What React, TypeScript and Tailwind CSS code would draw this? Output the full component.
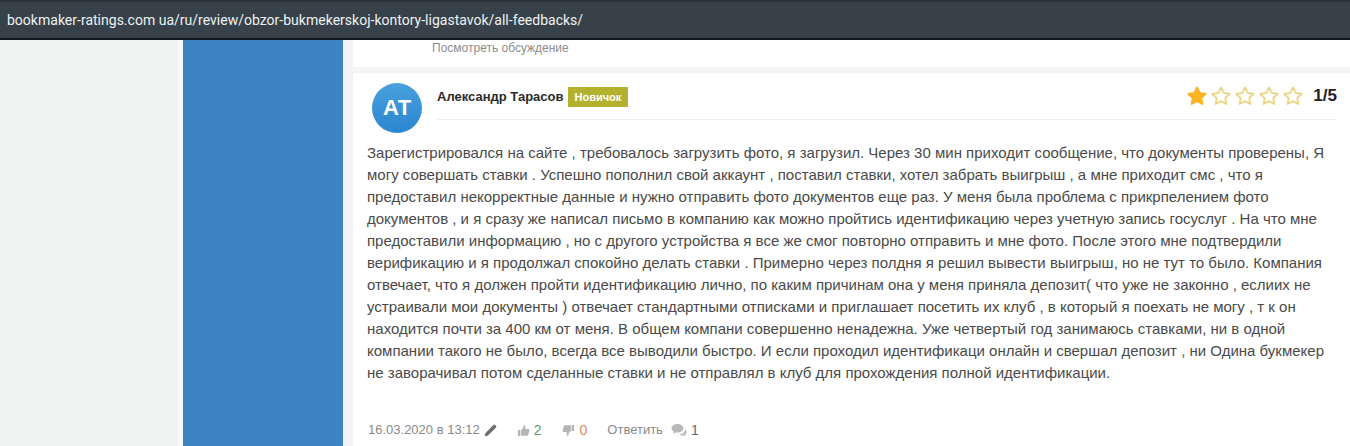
import React from "react";
import { Pencil } from "lucide-react";

const lines = [
  "Зарегистрировался на сайте , требовалось загрузить фото, я загрузил. Через 30 мин приходит сообщение, что документы проверены, Я",
  "могу совершать ставки . Успешно пополнил свой аккаунт , поставил ставки, хотел забрать выигрыш , а мне приходит смс , что я",
  "предоставил некорректные данные и нужно отправить фото документов еще раз. У меня была проблема с прикрпелением фото",
  "документов , и я сразу же написал письмо в компанию как можно пройтись идентификацию через учетную запись госуслуг . На что мне",
  "предоставили информацию , но с другого устройства я все же смог повторно отправить и мне фото. После этого мне подтвердили",
  "верификацию и я продолжал спокойно делать ставки . Примерно через полдня я решил вывести выигрыш, но не тут то было. Компания",
  "отвечает, что я должен пройти идентификацию лично, по каким причинам она у меня приняла депозит( что уже не законно , еслиих не",
  "устраивали мои документы ) отвечает стандартными отписками и приглашает посетить их клуб , в который я поехать не могу , т к он",
  "находится почти за 400 км от меня. В общем компани совершенно ненадежна. Уже четвертый год занимаюсь ставками, ни в одной",
  "компании такого не было, всегда все выводили быстро. И если проходил идентификаци онлайн и свершал депозит , ни Одина букмекер",
  "не заворачивал потом сделанные ставки и не отправлял в клуб для прохождения полной идентификации.",
];

const starPath = "M12 2.6l2.9 6.1 6.6.9-4.8 4.6 1.2 6.6L12 17.6l-5.9 3.2 1.2-6.6L2.5 9.6l6.6-.9z";

function Star({ filled }: { filled?: boolean }) {
  return (
    <svg viewBox="0 0 24 24" className="w-[22px] h-[22px] shrink-0">
      <path
        d={starPath}
        fill={filled ? "#f9b621" : "#ffffff"}
        stroke={filled ? "#f9b621" : "#ecd582"}
        strokeWidth="2"
        strokeLinejoin="round"
      />
    </svg>
  );
}

function Thumb({ down }: { down?: boolean }) {
  return (
    <svg viewBox="0 0 14 14" className={`w-[13px] h-[13px] ${down ? "rotate-180" : ""}`} fill="#b5b5b5">
      <path d="M1 6.5h2.6V13H1zM4.4 6.6 7 3.4V1c1.3 0 2 .9 2 2v2.4h3.2c.8 0 1.3.7 1.1 1.4l-1.2 5c-.1.5-.6.9-1.1.9H4.4z" />
    </svg>
  );
}

function Comments() {
  return (
    <svg viewBox="0 0 16 14" className="w-[16px] h-[14px]" fill="#b9b9b9">
      <path d="M6.5 1C3.2 1 .5 2.9.5 5.3c0 1.4.9 2.600 2.300 3.400-.2.8-.7 1.500-1.300 2 1.300-.1 2.500-.6 3.400-1.300.5.1 1.100.2 1.600.2 3.300 0 6-1.900 6-4.300S9.800 1 6.500 1z" />
      <path d="M14 5.600c.1.300.1.500.1.800 0 2.700-2.700 4.800-6.200 5 .9.700 2 1 3.200 1 .4 0 .8 0 1.200-.1.700.5 1.600.8 2.500.9-.4-.4-.7-.9-.9-1.500 1-.6 1.600-1.500 1.600-2.600 0-1.500-.600-2.800-1.500-3.500z" />
    </svg>
  );
}

export default function App() {
  return (
    <div className="w-[1350px] h-[446px] overflow-hidden flex flex-col bg-white font-['Liberation_Sans',Arial,sans-serif]">
      <div className="h-[40px] shrink-0 bg-[#36414a] border-t-2 border-b-2 border-t-[#2a323a] border-b-[#10171f] flex items-center pl-[7px] pb-[1px]">
        <span className="text-[#eef1f3] text-[14px] leading-none tracking-[0.01px] font-['Roboto',sans-serif]">
          bookmaker-ratings.com ua/ru/review/obzor-bukmekerskoj-kontory-ligastavok/all-feedbacks/
        </span>
      </div>
      <div className="flex-1 flex min-h-0">
        <div className="w-[178px] shrink-0 bg-[#f0f3f2]" />
        <div className="w-[5px] shrink-0 bg-[#f7f8f9]" />
        <div className="w-[160px] shrink-0 bg-[#3b83c2]" />
        <div className="w-[10px] shrink-0 bg-[#f2f3f5]" />
        <div className="flex-1 flex flex-col min-w-0">
          <div className="h-[27px] shrink-0 pl-[79px] pt-[1px] text-[12px] leading-[14px] text-[#8d8d8d]">
            Посмотреть обсуждение
          </div>
          <div className="h-[6px] shrink-0 bg-[#f4f4f4]" />
          <div className="flex-1 flex flex-col pl-[14px] pr-[14px]">
            <div className="flex pt-[10px] h-[69px] shrink-0">
              <div className="w-[50px] h-[50px] rounded-full bg-gradient-to-b from-[#4aa0dd] to-[#2a86d0] flex items-center justify-center text-white font-bold text-[22px] leading-none shrink-0 ml-[5px]">
                АТ
              </div>
              <div className="ml-[15px] flex-1 h-[37px] border-b border-[#efefef] flex items-start">
                <div className="flex items-center pt-[4px] flex-1">
                  <span className="text-[13px] leading-[20px] font-bold text-[#2a2a2a]">Александр Тарасов</span>
                  <span className="ml-[4px] h-[20px] px-[7px] bg-[#b4b12f] text-white font-bold text-[11px] leading-[20px]">Новичок</span>
                </div>
                <div className="flex items-center gap-[2px] pt-[2px] -mr-[1px]">
                  <Star filled />
                  <Star />
                  <Star />
                  <Star />
                  <Star />
                  <span className="ml-[7px] font-bold text-[17px] leading-[20px] text-[#222222]">1/5</span>
                </div>
              </div>
            </div>
            <div className="text-[15px] leading-[22px] text-[#4a4a4a] whitespace-nowrap">
              {lines.map((l) => (
                <div key={l}>{l}</div>
              ))}
            </div>
            <div className="flex items-center mt-[38px] pl-[1px] text-[13px] leading-[16px] text-[#8a8a8a]">
              <span>16.03.2020 в 13:12</span>
              <Pencil className="w-[13px] h-[13px] ml-[4px] text-[#6f6f6f]" fill="#6f6f6f" strokeWidth={1.5} />
              <span className="ml-[20px]"><Thumb /></span>
              <span className="ml-[4px] text-[#5f9a6a] text-[14px]">2</span>
              <span className="ml-[20px]"><Thumb down /></span>
              <span className="ml-[5px] text-[#e08a5d] text-[14px]">0</span>
              <span className="ml-[20px]">Ответить</span>
              <span className="ml-[8px]"><Comments /></span>
              <span className="ml-[4px] text-[#666666] text-[14px]">1</span>
            </div>
          </div>
        </div>
      </div>
    </div>
  );
}
